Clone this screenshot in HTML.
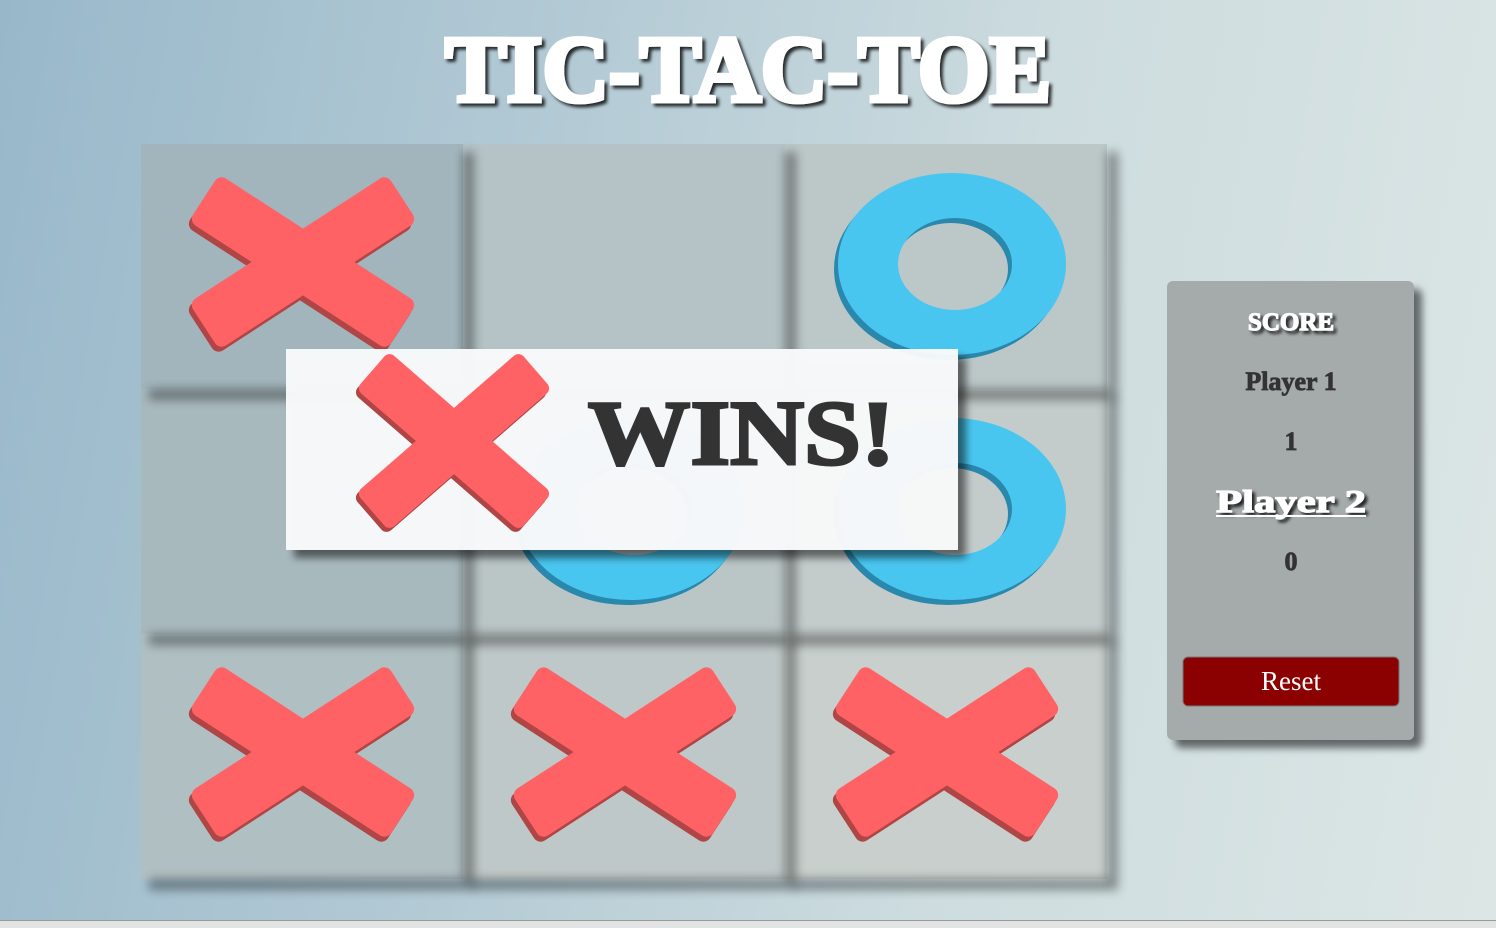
<!DOCTYPE html>
<html><head><meta charset="utf-8"><style>
html,body{margin:0;padding:0;width:1496px;height:928px;overflow:hidden}
body{background:linear-gradient(100deg,#98b8ca 0%,#b3cad5 35%,#cddcdf 65%,#dce6e5 100%)}
svg{position:absolute;left:0;top:0}
</style></head><body>
<svg width="1496" height="928" viewBox="0 0 1496 928" xmlns="http://www.w3.org/2000/svg">
<defs>
<filter id="sh" x="-10%" y="-10%" width="130%" height="130%"><feDropShadow dx="8" dy="8" stdDeviation="4" flood-color="#000" flood-opacity="0.55"/></filter>
<filter id="bl" x="-50%" y="-50%" width="200%" height="200%"><feGaussianBlur stdDeviation="5"/></filter>
<filter id="ts" x="-5%" y="-20%" width="110%" height="150%"><feDropShadow dx="3" dy="3" stdDeviation="1.5" flood-color="#000" flood-opacity="0.8"/></filter>
<g id="x">
 <g fill="#b04545" transform="translate(-3,5)">
  <rect x="-118" y="-28" width="236" height="56" rx="8" transform="rotate(33)"/>
  <rect x="-118" y="-28" width="236" height="56" rx="8" transform="rotate(-33)"/>
 </g>
 <g fill="#fe6265">
  <rect x="-118" y="-28" width="236" height="56" rx="8" transform="rotate(33)"/>
  <rect x="-118" y="-28" width="236" height="56" rx="8" transform="rotate(-33)"/>
 </g>
</g>
<g id="o">
 <path fill="#2b88ad" fill-rule="evenodd" transform="translate(-4,5)" d="M-114,0a114,91 0 1,0 228,0a114,91 0 1,0 -228,0M-54,0a57,46 0 1,0 114,0a57,46 0 1,0 -114,0"/>
 <path fill="#49c6f0" fill-rule="evenodd" d="M-114,0a114,91 0 1,0 228,0a114,91 0 1,0 -228,0M-54,0a57,46 0 1,0 114,0a57,46 0 1,0 -114,0"/>
</g>
<g id="cs" fill="#000" opacity="0.38" filter="url(#bl)">
 <rect x="322" y="8" width="11" height="245"/>
 <rect x="8" y="245" width="325" height="11"/>
</g>
</defs>
<rect x="141" y="144" width="322" height="245" fill="#a2b5bc"/>
<rect x="463" y="144" width="322" height="245" fill="#b5c3c6"/>
<rect x="785" y="144" width="322" height="245" fill="#bcc7c8"/>
<rect x="141" y="389" width="322" height="245" fill="#a8b9bd"/>
<rect x="463" y="389" width="322" height="245" fill="#bac5c6"/>
<rect x="785" y="389" width="322" height="245" fill="#c4cccb"/>
<rect x="141" y="634" width="322" height="245" fill="#b0bfc2"/>
<rect x="463" y="634" width="322" height="245" fill="#bfc8c8"/>
<rect x="785" y="634" width="322" height="245" fill="#c8cfcd"/>
<use href="#cs" transform="translate(141,144)"/>
<use href="#cs" transform="translate(463,144)"/>
<use href="#cs" transform="translate(785,144)"/>
<use href="#cs" transform="translate(141,389)"/>
<use href="#cs" transform="translate(463,389)"/>
<use href="#cs" transform="translate(785,389)"/>
<use href="#cs" transform="translate(141,634)"/>
<use href="#cs" transform="translate(463,634)"/>
<use href="#cs" transform="translate(785,634)"/>
<use href="#x" transform="translate(303,262)"/>
<use href="#o" transform="translate(952,264)"/>
<use href="#o" transform="translate(631,509)"/>
<use href="#o" transform="translate(952,509)"/>
<use href="#x" transform="translate(303,752)"/>
<use href="#x" transform="translate(625,752)"/>
<use href="#x" transform="translate(947,752)"/>
<rect x="286" y="349" width="672" height="201" fill="#fafcfd" fill-opacity="0.95" filter="url(#sh)"/>
<g transform="translate(454,441)">
 <g fill="#b04545" transform="translate(-3,4)">
  <rect x="-108" y="-25" width="216" height="50" rx="7" transform="rotate(41)"/>
  <rect x="-108" y="-25" width="216" height="50" rx="7" transform="rotate(-41)"/>
 </g>
 <g fill="#fe6265">
  <rect x="-108" y="-25" width="216" height="50" rx="7" transform="rotate(41)"/>
  <rect x="-108" y="-25" width="216" height="50" rx="7" transform="rotate(-41)"/>
 </g>
</g>
<text x="588" y="464" font-family="Liberation Serif, serif" font-weight="bold" font-size="92" fill="#333" stroke="#333" stroke-width="3" textLength="307" lengthAdjust="spacingAndGlyphs">WINS!</text>
<text x="445" y="101" font-family="Liberation Serif, serif" font-weight="bold" font-size="94" fill="#fff" stroke="#fff" stroke-width="5" textLength="606" lengthAdjust="spacingAndGlyphs" filter="url(#ts)">TIC-TAC-TOE</text>
<rect x="1167" y="281" width="247" height="459" rx="6" fill="#a5abab" filter="url(#sh)"/>
<g font-family="Liberation Serif, serif" font-weight="bold" text-anchor="middle">
 <text x="1291" y="330" font-size="25" fill="#fff" stroke="#fff" stroke-width="1.2" filter="url(#ts)">SCORE</text>
 <text x="1291" y="390" font-size="26" fill="#333" stroke="#333" stroke-width="0.8">Player 1</text>
 <text x="1291" y="450" font-size="26" fill="#333" stroke="#333" stroke-width="0.8">1</text>
 <text x="1291" y="512" font-size="32" fill="#fff" stroke="#fff" stroke-width="1.2" textLength="150" lengthAdjust="spacingAndGlyphs" filter="url(#ts)">Player 2</text>
 <rect x="1216" y="515" width="150" height="2" fill="#fff"/>
 <text x="1291" y="570" font-size="26" fill="#333" stroke="#333" stroke-width="0.8">0</text>
</g>
<rect x="1183" y="657" width="216" height="49" rx="5" fill="#8b0000" stroke="#777" stroke-width="1"/>
<text x="1291" y="690" font-family="Liberation Serif, serif" font-size="27" fill="#fff" text-anchor="middle">Reset</text>
<rect x="0" y="920" width="1496" height="8" fill="#e2e4e4"/>
<rect x="0" y="920" width="1496" height="1" fill="#999"/>
</svg>
</body></html>
